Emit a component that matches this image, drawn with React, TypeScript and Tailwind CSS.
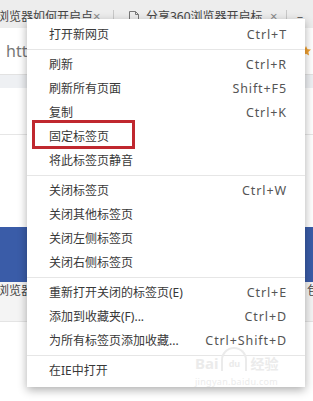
import React from "react";

type Entry = { label?: string; keys?: string; sep?: boolean };

const entries: Entry[] = [
  { label: "打开新网页", keys: "Ctrl+T" },
  { sep: true },
  { label: "刷新", keys: "Ctrl+R" },
  { label: "刷新所有页面", keys: "Shift+F5" },
  { label: "复制", keys: "Ctrl+K" },
  { label: "固定标签页" },
  { label: "将此标签页静音" },
  { sep: true },
  { label: "关闭标签页", keys: "Ctrl+W" },
  { label: "关闭其他标签页" },
  { label: "关闭左侧标签页" },
  { label: "关闭右侧标签页" },
  { sep: true },
  { label: "重新打开关闭的标签页(E)", keys: "Ctrl+E" },
  { label: "添加到收藏夹(F)...", keys: "Ctrl+D" },
  { label: "为所有标签页添加收藏...", keys: "Ctrl+Shift+D" },
  { sep: true },
  { label: "在IE中打开" },
];

function TabStrip() {
  return (
    <div className="flex h-[28px] items-center bg-[#ededed] pt-[6px] text-[12px] text-[#444]">
      <span className="-ml-[3px] w-[96px] overflow-hidden whitespace-nowrap">
        浏览器如何开启点
      </span>
      <span className="w-[20px] text-[13px] text-[#888]">×</span>
      <span className="h-[14px] w-px bg-[#c8c8c8]" />
      <svg
        className="ml-[15px] mr-[7px]"
        width="10"
        height="12"
        viewBox="0 0 10 12"
        fill="none"
        stroke="#777"
      >
        <path d="M0.5 0.5h6l3 3v8h-9z M6.5 0.5v3h3" />
      </svg>
      <span className="w-[124px] overflow-hidden whitespace-nowrap">
        分享360浏览器开启标
      </span>
      <span className="w-[16px] text-[13px] text-[#888]">×</span>
      <span className="h-[14px] w-px bg-[#c8c8c8]" />
      <span className="ml-[10px] text-[#666]">–</span>
    </div>
  );
}

function Background() {
  return (
    <div className="flex flex-col">
      <TabStrip />
      <div className="flex h-[47px] items-center justify-between border-b border-[#e2e2e2] bg-white pl-[6px] pr-[2px]">
        <span className="text-[16px] text-[#777]">https://</span>
        <svg width="10" height="10" viewBox="0 0 10 10">
          <path d="M5 0l1.5 3.2 3.5.4-2.6 2.4.7 3.5L5 7.8 1.9 9.5l.7-3.5L0 3.6l3.5-.4z" fill="#f0a030" />
        </svg>
      </div>
      <div className="h-[13px] bg-[#eef0f3]" />
      <div className="h-[47px] border-b border-[#e6e6e6] bg-white" />
      <div className="h-[92px] bg-white" />
      <div className="h-[55px] bg-[#3a5ca8]" />
      <div className="flex h-[18px] items-center justify-between overflow-hidden whitespace-nowrap bg-[#f4f4f4] text-[12px] text-[#444]">
        <span className="-ml-[3px]">浏览器如何</span>
        <span className="-mr-[6px]">包</span>
      </div>
      <div className="h-[22px] border-b border-[#e4e4e4] bg-[#f4f4f4]" />
      <div className="h-[80px] bg-white" />
    </div>
  );
}

function Menu() {
  return (
    <div className="absolute left-[27px] top-[19px] w-[278px] bg-white pb-[4px] pt-[4px] shadow-[0_3px_9px_rgba(0,0,0,0.32)]">
      {entries.map((e, i) =>
        e.sep ? (
          <div key={i} className="mb-[3px] mt-[2px] h-px bg-[#e6e6e6]" />
        ) : (
          <div
            key={i}
            className="flex h-[24px] items-center justify-between pl-[22px] pr-[18px] text-[12px]"
          >
            <span className="text-[#383838]">{e.label}</span>
            {e.keys && <span className="text-[12.5px] tracking-[0.9px] text-[#555]">{e.keys}</span>}
          </div>
        )
      )}
    </div>
  );
}

function Watermark() {
  return (
    <div className="pointer-events-none absolute left-[195px] top-[347px] flex flex-col text-[#ebebeb]">
      <div className="flex items-end gap-[3px]">
        <span className="text-[15px] font-bold leading-none">Bai</span>
        <span className="flex h-[24px] w-[26px] items-end justify-center rounded-t-full border-2 border-b-0 border-[#ebebeb] text-[9px] font-bold leading-[14px]">
          du
        </span>
        <span className="text-[14px] font-bold leading-none">经验</span>
      </div>
      <span className="mt-[6px] text-[9px] leading-none tracking-[0.3px]">jingyan.baidu.com</span>
    </div>
  );
}

export default function App() {
  return (
    <div className="relative h-[401px] w-[313px] overflow-hidden bg-white font-['Noto_Sans','Noto_Sans_CJK_SC',sans-serif]">
      <Background />
      <Menu />
      <Watermark />
      <div className="absolute left-[32px] top-[120px] h-[29px] w-[103px] border-[3px] border-[#c0282f]" />
    </div>
  );
}
